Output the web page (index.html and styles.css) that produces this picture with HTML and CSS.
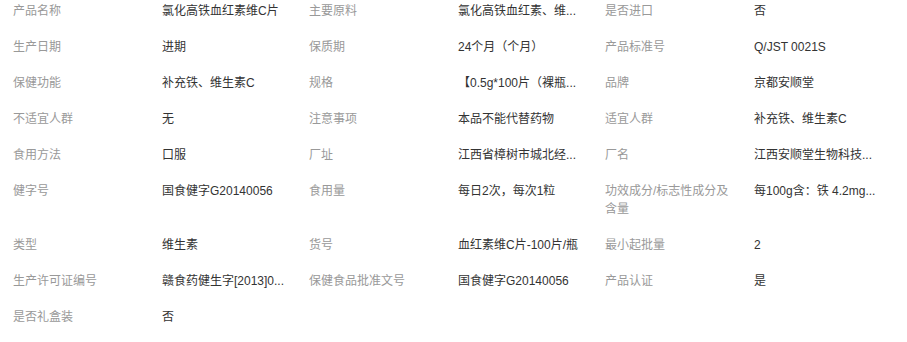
FILE: index.html
```html
<!DOCTYPE html>
<html lang="zh-CN">
<head>
<meta charset="utf-8">
<title>产品参数</title>
<link rel="stylesheet" href="styles.css">
</head>
<body>
<div class="attrs">
  <div class="lbl">产品名称</div><div class="val">氯化高铁血红素维C片</div>
  <div class="lbl">主要原料</div><div class="val" title="氯化高铁血红素、维生素C、淀粉、硬脂酸镁">氯化高铁血红素、维...</div>
  <div class="lbl">是否进口</div><div class="val">否</div>

  <div class="lbl">生产日期</div><div class="val">进期</div>
  <div class="lbl">保质期</div><div class="val">24个月（个月）</div>
  <div class="lbl">产品标准号</div><div class="val">Q/JST 0021S</div>

  <div class="lbl">保健功能</div><div class="val">补充铁、维生素C</div>
  <div class="lbl">规格</div><div class="val" title="【0.5g*100片（裸瓶）】">【0.5g*100片（裸瓶...</div>
  <div class="lbl">品牌</div><div class="val">京都安顺堂</div>

  <div class="lbl">不适宜人群</div><div class="val">无</div>
  <div class="lbl">注意事项</div><div class="val">本品不能代替药物</div>
  <div class="lbl">适宜人群</div><div class="val">补充铁、维生素C</div>

  <div class="lbl">食用方法</div><div class="val">口服</div>
  <div class="lbl">厂址</div><div class="val" title="江西省樟树市城北经济技术开发区">江西省樟树市城北经...</div>
  <div class="lbl">厂名</div><div class="val" title="江西安顺堂生物科技有限公司">江西安顺堂生物科技...</div>

  <div class="lbl">健字号</div><div class="val">国食健字G20140056</div>
  <div class="lbl">食用量</div><div class="val">每日2次，每次1粒</div>
  <div class="lbl">功效成分/标志性成分及含量</div><div class="val" title="每100g含：铁 4.2mg、维生素C 120mg">每100g含：铁 4.2mg...</div>

  <div class="lbl">类型</div><div class="val">维生素</div>
  <div class="lbl">货号</div><div class="val">血红素维C片-100片/瓶</div>
  <div class="lbl">最小起批量</div><div class="val">2</div>

  <div class="lbl">生产许可证编号</div><div class="val" title="赣食药健生字[2013]0012号">赣食药健生字[2013]0...</div>
  <div class="lbl">保健食品批准文号</div><div class="val">国食健字G20140056</div>
  <div class="lbl">产品认证</div><div class="val">是</div>

  <div class="lbl">是否礼盒装</div><div class="val">否</div>
</div>
</body>
</html>
```

FILE: styles.css
```css
html, body {
  margin: 0;
  padding: 0;
  background: #fff;
}

body {
  font-family: "Liberation Sans", "Noto Sans CJK SC", sans-serif;
  font-size: 12px;
  line-height: 18px;
}

.attrs {
  display: grid;
  grid-template-columns: 149px 147px 149px 147px 149px 147px;
  padding-left: 13px;
}

.lbl,
.val {
  padding: 2px 0 16px;
}

.lbl {
  color: #999;
  width: 128px;
}

.val {
  color: #333;
  width: 134px;
  white-space: nowrap;
}
```
